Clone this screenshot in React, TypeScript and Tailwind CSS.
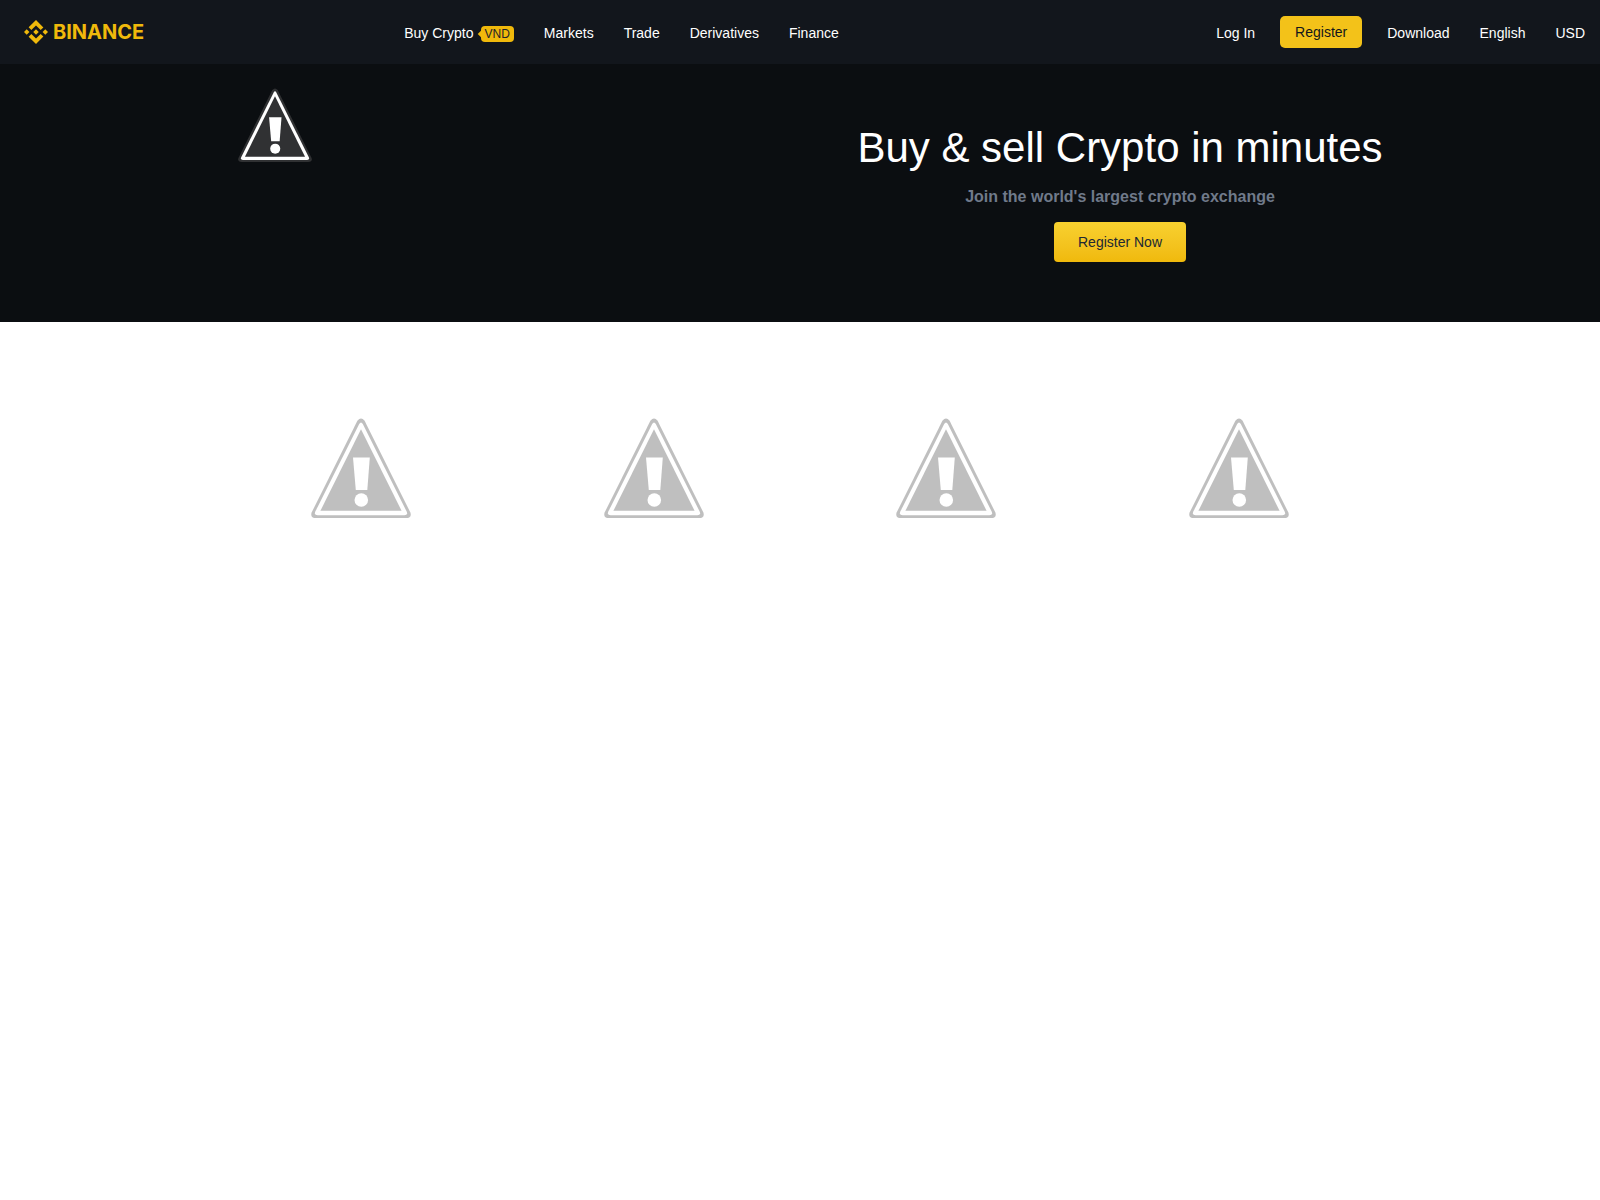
import React from "react";

const MENU = ["Markets", "Trade", "Derivatives", "Finance"];
const SETTINGS = ["Download", "English", "USD"];
const BANNERS = ["Banner 1", "Banner 2", "Banner 3", "Banner 4"];

function WarningIcon({ className, label }: { className: string; label: string }) {
  return (
    <svg viewBox="0 0 100 100" className={className} role="img" aria-label={label}>
      <path
        d="M46.4 2.8Q50 -1.6 53.6 2.8L99.4 94.6Q101 100 95 100H5Q-1 100 0.6 94.6Z"
        fill="currentColor"
      />
      <path
        d="M48.2 6Q50 2.8 51.8 6L95.9 94Q96.8 97.2 93.4 97.2H6.6Q3.2 97.2 4.1 94Z"
        fill="#fff"
      />
      <path d="M50 11.2L90.6 92.8H9.4Z" fill="currentColor" />
      <path d="M42 39.6H58.8L56.3 72H44.8Z" fill="#fff" />
      <circle cx="50.3" cy="82" r="6.8" fill="#fff" />
    </svg>
  );
}

function Logo() {
  return (
    <a href="#" className="flex items-center gap-[5px] text-[#f0b90b]">
      <svg viewBox="0 0 126.61 126.61" className="size-6" fill="currentColor" aria-hidden="true">
        <path d="M38.73 53.2l24.59-24.58 24.6 24.6 14.3-14.31L63.32 0l-38.9 38.9z" />
        <path d="M0 63.31L14.3 49l14.31 14.31-14.31 14.3z" />
        <path d="M38.73 73.41L63.32 98l24.6-24.6 14.31 14.29-38.9 38.91-38.91-38.88z" />
        <path d="M98 63.31L112.3 49l14.31 14.3-14.31 14.32z" />
        <path d="M77.83 63.3L63.32 48.78 48.79 63.3l14.53 14.53z" />
      </svg>
      <span className="font-[Inter,sans-serif] text-xl leading-6 font-bold">BINANCE</span>
    </a>
  );
}

function Header() {
  return (
    <header className="flex h-16 items-center bg-[#12161c] pr-[15px] text-sm text-white">
      <div className="w-1/4 pl-6">
        <Logo />
      </div>
      <nav className="flex grow items-center gap-[30px] pt-0.5 pl-2">
        <a href="#" className="flex items-center gap-[7px]">
          Buy Crypto
          <span className="relative mt-0.5 rounded bg-[#f0b90b] px-1 text-xs leading-4 text-[#1e2329]">
            <span className="absolute top-[5px] -left-0.5 size-1.5 rotate-45 bg-[#f0b90b]" />
            <span className="relative">VND</span>
          </span>
        </a>
        {MENU.map((item) => (
          <a key={item} href="#">
            {item}
          </a>
        ))}
      </nav>
      <div className="flex items-center">
        <a href="#" className="pt-0.5">
          Log In
        </a>
        <button type="button" className="mx-[25px] h-8 rounded-[5px] bg-[#f3c219] px-[15px] text-[#12161c]">
          Register
        </button>
        <div className="flex gap-[30px] pt-0.5">
          {SETTINGS.map((item) => (
            <a key={item} href="#">
              {item}
            </a>
          ))}
        </div>
      </div>
    </header>
  );
}

function Hero() {
  return (
    <section className="bg-[#0b0e11]">
      <div className="mx-auto grid max-w-7xl grid-cols-2 pt-6 pb-[60px]">
        <div className="pl-[78px]">
          <WarningIcon className="size-[74px] text-[#303133]" label="Hero image" />
        </div>
        <div className="flex flex-col items-center pt-8">
          <h1 className="text-[42px] leading-[56px] text-white">Buy &amp; sell Crypto in minutes</h1>
          <p className="mt-[9px] text-base font-bold text-[#707a8a]">
            Join the world's largest crypto exchange
          </p>
          <button
            type="button"
            className="mt-[13px] h-10 rounded bg-linear-to-b from-[#f8d12f] to-[#f0b90b] px-6 text-sm text-[#212833]"
          >
            Register Now
          </button>
        </div>
      </div>
    </section>
  );
}

export default function App() {
  return (
    <div className="min-h-screen bg-white font-['Liberation_Sans',Arial,sans-serif]">
      <Header />
      <main>
        <Hero />
        <section className="mx-auto grid max-w-[1170px] grid-cols-4 justify-items-center pt-24">
          {BANNERS.map((banner) => (
            <a key={banner} href="#">
              <WarningIcon className="size-[100px] text-[#bfbfbf]" label={banner} />
            </a>
          ))}
        </section>
      </main>
    </div>
  );
}
